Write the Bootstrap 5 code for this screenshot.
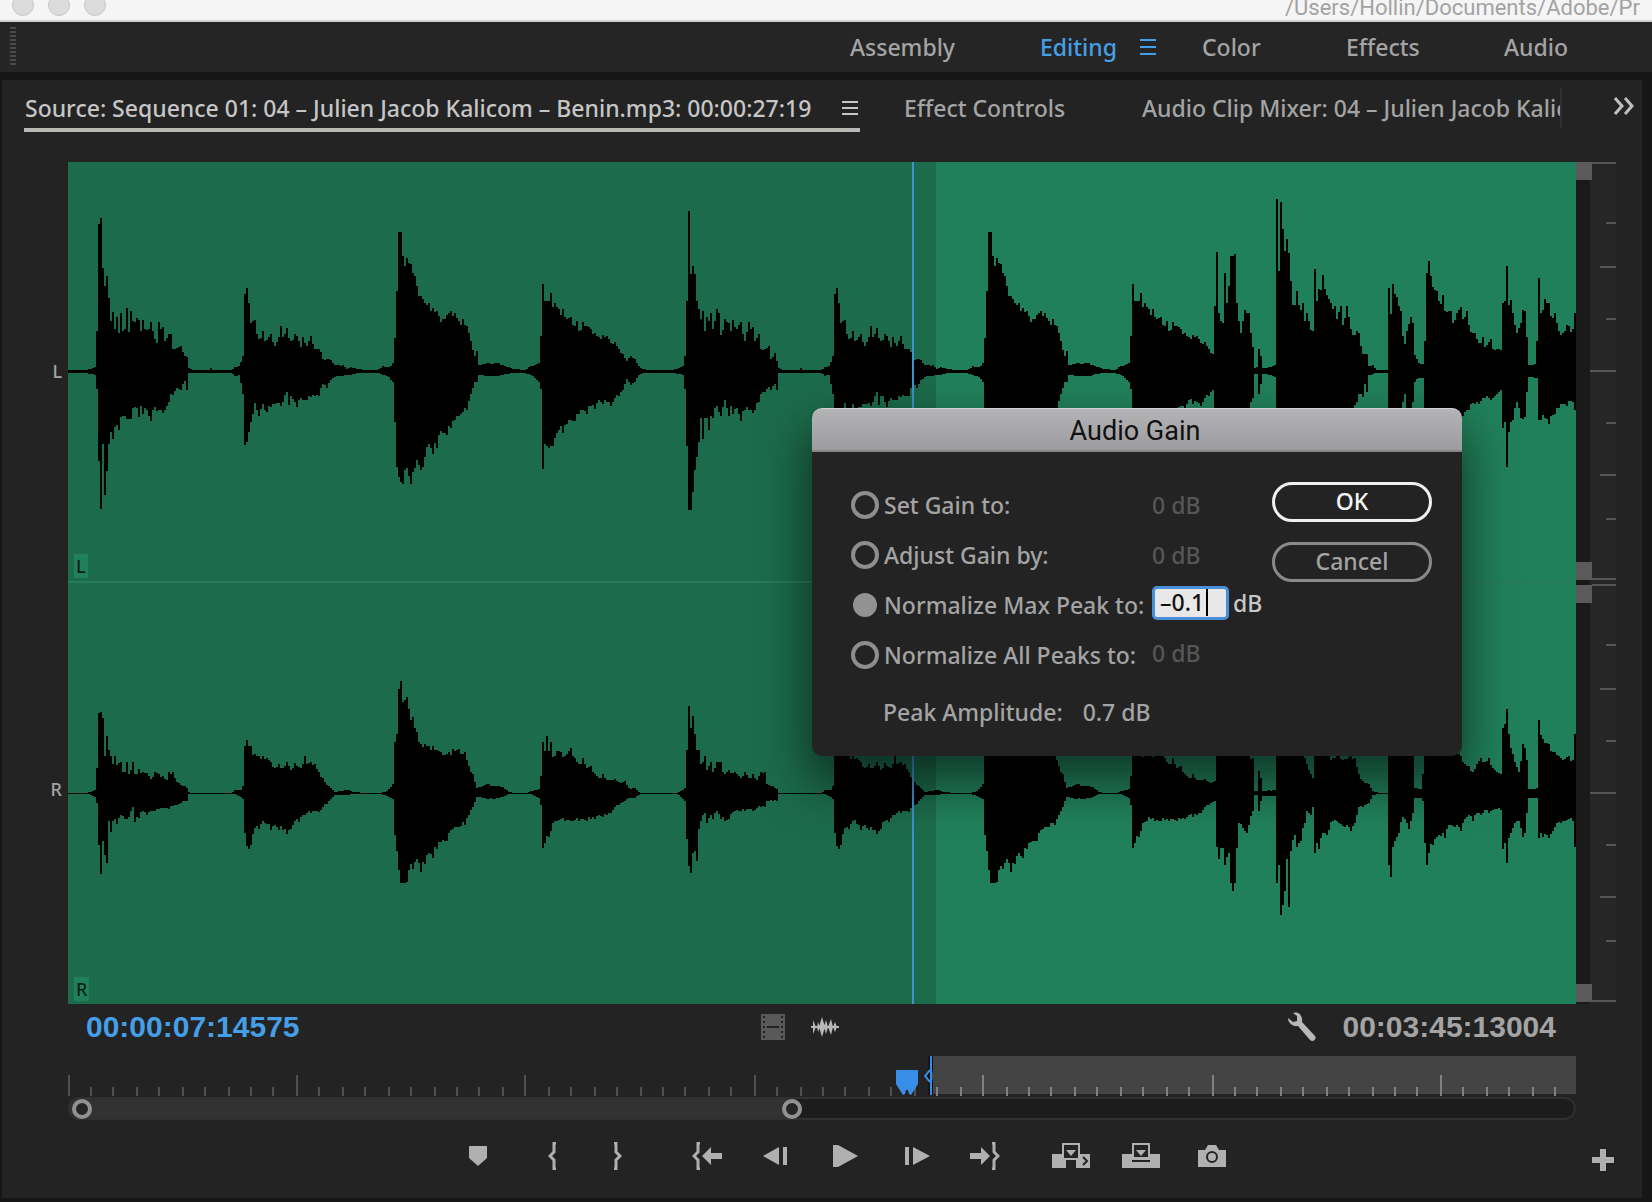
<!DOCTYPE html>
<html lang="en">
<head>
<meta charset="utf-8">
<meta name="viewport" content="width=device-width, initial-scale=1">
<title>Source Monitor</title>
<link href="https://cdn.jsdelivr.net/npm/bootstrap@5.3.0/dist/css/bootstrap.min.css" rel="stylesheet">
<style>
:root{--ui:#232323;--edge:#161616;--txt:#a4a4a4;--icon:#b0b0b0;--blue:#459fe6}
body{background:var(--edge);color:var(--txt);font-family:"Noto Sans","Open Sans",sans-serif;font-size:23px;font-weight:500;line-height:32px;height:100vh;min-height:900px;overflow:hidden}
a,a:hover{color:inherit;text-decoration:none}
svg{display:block;flex:none}
.titlebar{height:22px;background:#f5f5f5;border-bottom:2px solid #cfcfcf;padding-left:12px}
.light-dot{width:22px;height:22px;border-radius:50%;background:#dcdcdc;border:1px solid #c8c8c8;margin-top:-6px}
.doc-path{width:367px;color:#a3a3a3;font:22px/28px Roboto,"Liberation Sans",sans-serif;margin-top:-6px;white-space:nowrap}
.workspaces{height:50px;background:#252525}
.grip{width:6px;height:40px;margin-left:10px;background:repeating-linear-gradient(#4a4a4a 0 2px,transparent 2px 4px)}
.ws-list{display:grid;grid-template-columns:190px 162px 144px 158px 148px}
.active-ws{color:var(--blue)}
.monitor{background:var(--ui);margin:8px 10px 4px 2px}
.tabs{display:grid;grid-template-columns:836px 155px minmax(0,1fr) 80px;height:54px;padding:8px 0 0 22px}
.tab-on{color:#c6c6c6;border-bottom:4px solid #b9b9b5;height:44px;padding:0 2px 0 1px}
.tab-two{padding:4px 0;margin-left:44px;white-space:nowrap}
.tab-three{padding:4px 0;margin-left:127px;height:40px;white-space:nowrap;overflow:hidden;border-right:2px solid #303030}
.stage{padding:28px 26px 0 0}
.gutter{width:66px;font-size:18px;line-height:24px;padding-bottom:6px}
.gutter span{flex:1 1 0;display:flex;align-items:center;justify-content:flex-end;padding-right:6px}
.wave{background:linear-gradient(90deg,#1c6b4c 0 57.56%,#21805c 57.56%)}
.channel{flex:422 1 0;min-height:0}
.channel svg{position:absolute;inset:0;width:100%;height:100%}
.split{flex-grow:420;border-bottom:2px solid #277b5c}
.chip{position:absolute;left:6px;bottom:3px;background:#21805c;color:#0a1f17;font-size:18px;line-height:24px;padding:0 2px}
.playline{position:absolute;left:55.97%;top:0;bottom:0;width:2px;background:#3d92cf}
.vscroll{width:14px;background:#1a1a1a}
.vscroll div{flex:1 1 0}
.vscroll i{display:block;width:16px;height:18px;background:#5a5a5a;position:relative}
.scale{width:26px;background:#262626}
.scale svg{flex:1 1 0;min-height:0;width:26px}
.info{height:50px;padding:0 86px 4px 84px;font:bold 30px/46px "Liberation Sans",Arial,sans-serif}
.info .side{flex:1 1 0}
.modes{gap:26px;padding-right:42px}
.time-in{color:var(--blue)}
.ruler{height:40px;margin:2px 66px 0 66px}
.ruler .bandbg{position:absolute;left:57.2%;right:0;top:0;height:38px;background:#444}
.ruler>.tickmarks{position:absolute;left:0;top:0;width:100%;height:40px}
.head-mark{position:absolute;left:54.9%;top:14px}
.in-mark{position:absolute;left:56.7%;top:0}
.zoombar{height:23px;margin:1px 66px 0 66px;background:#1c1c1c;border:2px solid #303030;border-radius:12px}
.zoombar .thumb{width:48.7%;height:100%;background:#323232;border-radius:10px}
.knob{width:20px;height:20px;border:4px solid #929292;border-radius:50%;background:#262626}
.transport{height:78px;padding:0 28px 6px 466px}
.transport .btn,.bare{border:0;padding:0;color:var(--icon);display:block;line-height:0}
.transport-set{display:grid;grid-template-columns:80px 64px 80px 71px 70px 72px 65px 82px 70px 76px 28px;height:28px;align-items:center}
.gain{position:absolute;left:812px;top:408px;width:650px;background:var(--ui);border-radius:10px;box-shadow:0 24px 50px 4px rgba(0,0,0,.55);border:0;color:var(--txt)}
.gain-head{height:44px;background:linear-gradient(#b4b4b6,#9c9c9e);border-top:1px solid #d2d2d2;border-bottom:2px solid #858587;border-radius:10px 10px 0 0;color:#111;font:27px/44px Roboto,"Liberation Sans",sans-serif;padding-right:4px}
.gain-body{padding:28px 30px 28px 39px}
.gain-row{display:grid;grid-template-columns:33px 268px 1fr;height:50px;align-items:center}
.gain-row .form-check-input{width:28px;height:28px;margin:0;border:4px solid #8e8e8e;background:transparent;box-shadow:none}
.gain-row .form-check-input:checked{background:#929292;width:24px;height:24px;margin-left:2px;border-color:#929292}
.off{color:#565656}
.gain-edit{gap:4px;color:#c8c8c8;padding-bottom:4px}
.gain-val{width:77px;height:34px;border:3px solid #4a8fd8;border-radius:5px;background:#e8e8e8;color:#111;padding:0 0 2px 5px;font-size:23px;line-height:26px;font-weight:500}
.caret-bar{position:absolute;left:54px;top:3px;width:2px;height:27px;background:#000}
.pill{width:160px;height:40px;border-radius:20px;border:3px solid #8a8a8a;color:var(--txt);font-size:23px;font-weight:500;line-height:30px;padding:0 0 2px}
.pill.ok{border-color:#f0f0f0;color:#f4f4f4}
</style>
<script src="https://cdn.jsdelivr.net/npm/bootstrap@5.3.0/dist/js/bootstrap.bundle.min.js"></script>
</head>
<body class="d-flex flex-column">
<header class="titlebar d-flex justify-content-between overflow-hidden flex-shrink-0">
  <div class="d-flex" style="gap:14px"><span class="light-dot"></span><span class="light-dot"></span><span class="light-dot"></span></div>
  <div class="doc-path">/Users/Hollin/Documents/Adobe/Pr</div>
</header>
<nav class="workspaces d-flex align-items-center justify-content-between flex-shrink-0">
  <div class="grip"></div>
  <div class="ws-list">
    <a href="#">Assembly</a>
    <a href="#" class="active-ws d-flex align-items-center justify-content-between" style="padding-right:46px">Editing <svg width="16" height="16" fill="currentColor"><path d="M0 0h16v2H0zM0 7h16v2H0zM0 14h16v2H0z"/></svg></a>
    <a href="#">Color</a><a href="#">Effects</a><a href="#">Audio</a>
  </div>
</nav>
<main class="monitor flex-fill d-flex flex-column">
  <nav class="tabs flex-shrink-0">
    <a href="#" class="tab-on d-flex align-items-center justify-content-between text-nowrap">Source: Sequence 01: 04 – Julien Jacob Kalicom – Benin.mp3: 00:00:27:19
      <svg width="16" height="14" fill="currentColor"><path d="M0 0h16v2H0zM0 6h16v2H0zM0 12h16v2H0z"/></svg></a>
    <a href="#" class="tab-two">Effect Controls</a>
    <a href="#" class="tab-three">Audio Clip Mixer: 04 – Julien Jacob Kalicom</a>
    <button class="btn bare align-self-start ms-auto" style="margin:9px 8px 0 0" aria-label="More tabs"><svg width="20" height="18" fill="none" stroke="#c0c0c0" stroke-width="3"><path d="M1 1l7 8-7 8M11 1l7 8-7 8"/></svg></button>
  </nav>
  <section class="stage flex-fill d-flex">
    <div class="gutter d-flex flex-column"><span>L</span><span>R</span></div>
    <div class="wave flex-fill d-flex flex-column position-relative">
      <div class="channel split position-relative"><svg id="waveL" viewBox="0 0 1508 418" preserveAspectRatio="none"></svg><span class="chip">L</span></div>
      <div class="channel position-relative"><svg id="waveR" viewBox="0 0 1508 422" preserveAspectRatio="none"></svg><span class="chip">R</span></div>
      <div class="playline"></div>
    </div>
    <div class="vscroll d-flex flex-column">
      <div class="d-flex flex-column justify-content-between" style="padding-bottom:4px"><i></i><i></i></div>
      <div class="d-flex flex-column justify-content-between" style="padding:1px 0 2px"><i></i><i></i></div>
    </div>
    <div class="scale d-flex flex-column">
      <svg viewBox="0 0 26 421" preserveAspectRatio="none" stroke="#555" stroke-width="2"><path d="M2 1h24M16 61h10M10 105h16M16 157h10M0 209h26M16 261h10M10 313h16M16 357h10M2 417h24"/></svg>
      <svg viewBox="0 0 26 421" preserveAspectRatio="none" stroke="#555" stroke-width="2"><path d="M2 2h24M16 62h10M10 106h16M16 158h10M0 210h26M16 262h10M10 314h16M16 358h10M2 418h24"/></svg>
    </div>
  </section>
  <section class="info d-flex align-items-center flex-shrink-0">
    <div class="side time-in">00:00:07:14575</div>
    <div class="modes d-flex align-items-center">
      <svg width="24" height="26"><path fill="#595959" d="M0 0h24v26H0z"/><path stroke="#222" stroke-width="2" stroke-dasharray="2 3" d="M3 2v24M21 2v24"/><path stroke="#222" stroke-width="2" d="M6 13h12"/></svg>
      <svg width="28" height="22" fill="none" stroke="#b8b8b8"><path stroke-width="2" d="M0 11h28"/><path fill="#b8b8b8" stroke="none" d="M2 4l3 7-3 7zM6 11l1-5 2 5-2 5zM8 11l3-10 3 10-3 10zM13 11l2-7 2 7-2 7zM17 11l3-8 2 8-2 8zM22 11l2-5 2 5-2 5z"/></svg>
    </div>
    <div class="side d-flex justify-content-end align-items-center" style="gap:26px">
      <svg width="28" height="30" viewBox="0 0 28 30" fill="#b8b8b8"><path d="M5 1c5-2 10 2 9 9l13 14c2 3-2 7-5 4L10 14C5 15 0 11 0 6l5 4 4-1V4z"/></svg>
      <span>00:03:45:13004</span>
    </div>
  </section>
  <section class="ruler position-relative flex-shrink-0">
    <div class="bandbg"></div>
    <svg class="tickmarks" id="ticks" viewBox="0 0 1508 40" preserveAspectRatio="none"></svg>
    <svg class="head-mark" width="22" height="26" fill="#388de6"><path d="M0 0h22v14l-5 8-2 3-2-1-1-4h-2l-1 4-2 1-2-3-5-8z"/></svg>
    <svg class="in-mark" width="10" height="40" fill="none"><path stroke="#101010" stroke-width="5" d="M8 0v14l-5 6 5 6v13"/><path stroke="#388de6" stroke-width="2" d="M8 0v39M7 14l-5 6 5 6"/></svg>
  </section>
  <section class="zoombar flex-shrink-0">
    <div class="thumb d-flex align-items-center justify-content-between" style="padding-left:2px"><span class="knob"></span><span class="knob"></span></div>
  </section>
  <section class="transport d-flex align-items-center justify-content-between flex-shrink-0">
    <div class="transport-set">
      <button class="btn" aria-label="Add marker"><svg width="20" height="20" fill="currentColor"><path d="M1 0h18v12l-9 8-9-8z"/></svg></button>
      <button class="btn" aria-label="Mark in"><svg width="10" height="28" fill="none" stroke="currentColor" stroke-width="3"><path d="M8 1H6v9l-4 4 4 4v9h2"/></svg></button>
      <button class="btn" aria-label="Mark out"><svg width="10" height="28" fill="none" stroke="currentColor" stroke-width="3"><path d="M2 1h2v9l4 4-4 4v9H2"/></svg></button>
      <button class="btn" aria-label="Go to in"><svg width="30" height="28" fill="none" stroke="currentColor" stroke-width="3"><path d="M8 1H6v9l-4 4 4 4v9h2"/><path fill="currentColor" stroke="none" d="M10 14l9-9v6h11v6H19v6z"/></svg></button>
      <button class="btn" aria-label="Step back"><svg width="26" height="20" fill="currentColor"><path d="M0 10L16 1v18zM20 1h4v18h-4z"/></svg></button>
      <button class="btn" aria-label="Play"><svg width="26" height="24" fill="currentColor"><path d="M0 1h5l20 11L5 23H0z"/></svg></button>
      <button class="btn" aria-label="Step forward"><svg width="26" height="20" fill="currentColor"><path d="M0 1h4v18H0zM8 1l17 9-17 9z"/></svg></button>
      <button class="btn" aria-label="Go to out"><svg width="30" height="28" fill="none" stroke="currentColor" stroke-width="3"><path d="M22 1h2v9l4 4-4 4v9h-2"/><path fill="currentColor" stroke="none" d="M20 14l-9-9v6H0v6h11v6z"/></svg></button>
      <button class="btn" aria-label="Insert"><svg width="38" height="26" fill="currentColor"><path d="M0 11h10v6h18v-6h10v14H24v-8H14v8H0z"/><path fill="#232323" stroke="currentColor" stroke-width="2" d="M11 1h16v15H11z"/><path d="M14 7h10l-5 6z"/><path fill="none" stroke="#232323" stroke-width="2" d="M31 14l4 4-4 4"/></svg></button>
      <button class="btn" aria-label="Overwrite"><svg width="38" height="26" fill="currentColor"><path d="M0 11h38v14H0z"/><path fill="#232323" stroke="currentColor" stroke-width="2" d="M11 1h16v14H11z"/><path d="M14 7h10l-5 6z"/><path fill="#232323" d="M10 17h18v2H10z"/></svg></button>
      <button class="btn" aria-label="Export frame"><svg width="28" height="24" fill="currentColor"><path d="M0 6h7l3-5h8l3 5h7v17H0z"/><circle cx="14" cy="13" r="5" fill="none" stroke="#232323" stroke-width="2"/></svg></button>
    </div>
    <button class="btn" aria-label="Button editor"><svg width="22" height="30" fill="currentColor"><path d="M8 8h6v8h8v6h-8v8H8v-8H0v-6h8z"/></svg></button>
  </section>
</main>

<form class="gain" role="dialog" aria-labelledby="gainTitle">
  <div class="gain-head text-center" id="gainTitle">Audio Gain</div>
  <div class="gain-body d-flex justify-content-between">
    <div>
      <div class="gain-row"><input class="form-check-input" type="radio" name="g" id="g1"><label for="g1">Set Gain to:</label><span class="off">0 dB</span></div>
      <div class="gain-row"><input class="form-check-input" type="radio" name="g" id="g2"><label for="g2">Adjust Gain by:</label><span class="off">0 dB</span></div>
      <div class="gain-row"><input class="form-check-input" type="radio" name="g" id="g3" checked><label for="g3">Normalize Max Peak to:</label>
        <span class="gain-edit d-flex align-items-center position-relative"><input class="gain-val" value="–0.1" aria-label="Normalize Max Peak value"><span class="caret-bar"></span>dB</span></div>
      <div class="gain-row"><input class="form-check-input" type="radio" name="g" id="g4"><label for="g4">Normalize All Peaks to:</label><span class="off pb-1">0 dB</span></div>
      <div class="d-flex" style="gap:20px;padding:16px 0 0 32px"><span>Peak Amplitude:</span><span>0.7 dB</span></div>
    </div>
    <div class="d-flex flex-column" style="gap:20px;padding-top:2px">
      <button type="button" class="btn pill ok">OK</button>
      <button type="button" class="btn pill">Cancel</button>
    </div>
  </div>
</form>

<script>
// Envelopes of single notes: [column, above, below]; a column is 2 units wide, 0 is the attack.
const N = {
 aL:[[-9,1,1],[-5,2,2],[-3,4,3],[-2,40,17],[-1,147,89],[0,153,137],[1,103,72],[2,85,123],[3,95,99],[4,73,72],[5,50,60],[6,59,67],[7,42,55],[8,54,53],[9,38,58],[10,58,45],[11,40,44],[12,42,44],[13,63,47],[14,39,47],[15,60,47],[16,50,36],[18,53,36],[19,51,45],[20,40,34],[21,51,42],[22,42,36],[24,42,44],[25,49,49],[26,40,38],[28,28,39],[29,49,38],[31,44,41],[32,30,38],[34,37,30],[35,37,22],[36,22,23],[38,23,16],[40,25,18],[42,15,9],[43,14,18],[44,3,1],[46,1,1],[54,1,1],[55,3,1],[56,1,1]],
 aR:[[-7,1,1],[-5,2,2],[-3,4,4],[-2,26,10],[-1,81,52],[0,82,81],[1,76,48],[2,38,62],[3,58,70],[4,44,28],[5,38,39],[6,30,28],[7,38,26],[8,29,31],[10,32,22],[11,22,23],[12,22,26],[13,32,26],[14,20,24],[16,32,14],[17,20,29],[18,20,24],[19,25,25],[21,22,18],[23,21,22],[25,15,18],[27,22,18],[29,20,16],[31,18,15],[33,14,15],[34,22,16],[36,22,13],[38,12,12],[40,9,10],[42,8,8],[43,6,8],[44,2,1],[46,1,1]],
 bL:[[-8,1,1],[-6,4,4],[-4,5,3],[-2,15,22],[-1,77,73],[0,83,70],[1,68,60],[2,48,50],[3,50,42],[4,51,31],[5,37,38],[6,32,44],[8,40,32],[9,30,38],[10,31,40],[12,37,35],[14,25,32],[16,34,31],[17,45,34],[18,34,30],[20,43,20],[21,33,33],[22,30,24],[24,37,30],[25,35,35],[27,24,26],[28,34,28],[30,25,28],[32,35,25],[34,22,24],[36,22,24],[37,19,16],[38,12,12],[40,12,16],[42,11,8],[44,6,5],[48,6,4],[50,2,3],[52,4,3],[56,2,1],[60,1,1]],
 bR:[[-8,1,1],[-6,4,1],[-3,4,4],[-2,8,6],[-1,48,40],[0,54,53],[1,48,56],[2,48,52],[3,39,41],[4,40,35],[6,38,36],[8,38,28],[10,36,31],[12,32,37],[14,26,32],[16,30,37],[18,26,37],[20,32,41],[22,24,36],[24,31,28],[26,27,29],[28,30,22],[29,38,22],[30,30,20],[32,32,20],[34,30,18],[36,22,19],[38,16,14],[40,9,11],[42,6,6],[44,2,2],[50,4,2],[54,2,1],[58,1,1]],
 cL:[[-11,1,1],[-8,5,3],[-5,4,5],[-3,8,10],[-2,33,50],[-1,80,95],[0,139,105],[1,139,110],[2,115,112],[3,105,98],[4,113,96],[5,108,104],[6,107,112],[7,98,100],[8,95,96],[9,85,88],[10,75,93],[11,75,98],[12,72,95],[13,68,85],[15,68,72],[17,63,82],[19,60,76],[20,55,63],[22,52,61],[24,56,63],[26,60,56],[28,58,48],[30,50,44],[32,52,40],[34,45,38],[36,30,22],[38,15,10],[39,20,10],[40,6,3],[44,8,4],[50,8,4],[54,4,2],[58,2,1],[62,1,1]],
 cR:[[-10,1,1],[-6,3,3],[-3,10,6],[-2,52,42],[-1,60,58],[0,105,77],[1,113,90],[2,92,90],[3,94,90],[4,97,89],[5,85,77],[7,77,76],[9,62,66],[10,52,70],[11,50,79],[13,50,71],[15,48,60],[17,48,65],[19,44,56],[21,42,49],[24,40,48],[27,45,36],[30,45,34],[33,42,32],[35,28,22],[37,20,14],[39,6,4],[44,10,6],[48,8,6],[52,7,4],[55,2,1],[58,1,1]],
 dL:[[-9,1,1],[-5,3,2],[-3,5,3],[-2,15,17],[-1,70,74],[0,160,138],[1,97,138],[2,105,120],[3,97,98],[4,70,85],[5,62,70],[6,52,46],[7,60,67],[8,40,46],[9,54,46],[10,50,58],[11,58,44],[12,42,46],[14,62,34],[15,58,40],[16,36,44],[18,52,28],[20,48,44],[21,40,34],[22,51,42],[24,42,36],[26,49,49],[28,30,38],[30,49,38],[32,44,41],[33,30,38],[35,37,30],[36,22,22],[38,22,20],[40,25,15],[41,12,18],[43,18,12],[44,10,18],[45,3,1],[47,1,1],[55,1,1],[56,3,1],[57,1,1]],
 dR:[[-7,1,1],[-5,2,2],[-2,6,8],[-1,44,46],[0,88,73],[1,66,80],[2,78,60],[3,60,58],[4,44,68],[5,44,36],[6,30,28],[8,38,20],[9,24,30],[11,32,22],[12,22,26],[14,32,18],[16,32,26],[17,22,24],[18,20,28],[20,24,26],[23,22,18],[26,16,18],[28,22,18],[30,16,16],[32,20,18],[34,14,15],[36,22,14],[38,22,14],[39,10,8],[42,8,8],[44,5,8],[45,1,1]],
 eL:[[-9,1,1],[-6,5,3],[-2,8,10],[-1,35,17],[0,87,97],[1,70,72],[2,70,74],[3,70,76],[4,78,74],[5,64,74],[6,68,66],[8,62,58],[10,62,61],[12,52,52],[14,54,48],[16,45,49],[17,50,42],[18,40,42],[20,49,38],[22,45,42],[24,42,34],[26,38,37],[28,34,28],[30,36,32],[32,35,30],[34,28,34],[36,29,26],[38,22,24],[40,17,18],[42,10,7],[44,15,13],[46,12,10],[48,5,3],[50,2,1],[53,1,1]],
 eR:[[-8,1,1],[-6,3,1],[-2,5,5],[-1,18,12],[0,52,55],[1,43,50],[2,58,43],[3,43,44],[4,52,38],[5,37,30],[7,43,28],[9,42,26],[11,38,28],[14,46,28],[16,36,27],[18,30,28],[20,36,26],[22,26,28],[24,28,26],[26,20,26],[28,16,22],[30,20,24],[32,14,22],[34,14,20],[36,15,14],[38,12,12],[41,13,8],[43,6,5],[46,6,5],[48,2,2],[50,1,1]]
};
// The busy last quarter: [x, above, below].
const tailL = [[1148,119,60],[1150,58,60],[1152,50,60],[1154,48,60],[1156,98,60],[1158,68,60],[1160,85,60],[1162,115,60],[1164,115,60],[1166,117,60],[1168,68,60],[1170,50,40],[1172,38,37],[1174,50,45],[1176,61,50],[1180,58,45],[1182,38,30],[1184,24,26],[1186,3,2],[1188,4,2],[1190,22,22],[1192,15,12],[1194,3,2],[1202,4,3],[1206,6,5],[1208,172,80],[1210,100,80],[1212,169,80],[1214,142,80],[1216,120,80],[1218,132,80],[1220,118,80],[1222,90,80],[1224,66,60],[1226,66,60],[1228,80,60],[1230,66,60],[1234,68,60],[1236,50,60],[1238,58,60],[1240,50,50],[1244,40,36],[1246,102,60],[1248,70,60],[1250,82,60],[1254,96,60],[1258,76,60],[1262,68,60],[1266,65,60],[1268,52,50],[1272,65,50],[1274,46,50],[1278,65,50],[1282,42,40],[1284,36,38],[1288,40,30],[1290,38,22],[1294,17,25],[1296,17,12],[1298,17,20],[1300,5,3],[1304,6,2],[1308,1,1],[1318,1,1],[1320,83,60],[1322,57,60],[1324,87,60],[1328,74,60],[1330,65,50],[1332,60,40],[1334,35,30],[1336,27,22],[1338,40,36],[1342,54,40],[1344,48,30],[1346,16,10],[1350,8,6],[1354,7,6],[1356,30,50],[1358,98,60],[1360,110,60],[1362,95,60],[1368,80,60],[1370,70,60],[1374,76,60],[1376,60,55],[1382,60,50],[1384,48,50],[1388,58,48],[1392,64,46],[1394,52,44],[1398,60,38],[1400,46,38],[1406,38,32],[1410,28,32],[1414,34,26],[1416,24,26],[1422,32,28],[1424,22,26],[1430,22,20],[1432,21,18],[1434,68,56],[1436,70,50],[1438,105,95],[1440,66,60],[1442,71,50],[1444,58,48],[1448,38,30],[1452,48,46],[1454,61,47],[1456,60,45],[1458,34,20],[1460,6,5],[1466,7,6],[1468,30,6],[1470,93,48],[1472,58,48],[1476,72,46],[1480,68,52],[1482,55,44],[1486,58,42],[1490,40,36],[1494,38,32],[1498,46,34],[1504,42,30],[1506,58,38]];
const tailR = [[1148,60,54],[1150,50,66],[1154,40,55],[1156,50,72],[1160,60,60],[1162,60,90],[1164,60,98],[1166,60,90],[1168,50,55],[1170,48,30],[1174,45,35],[1178,45,40],[1180,40,32],[1184,36,18],[1186,3,2],[1188,3,2],[1190,23,18],[1192,16,8],[1194,3,3],[1206,4,3],[1208,90,90],[1210,80,72],[1212,80,122],[1214,80,112],[1216,80,98],[1218,70,66],[1220,70,114],[1222,60,58],[1226,50,42],[1228,50,54],[1232,45,48],[1236,36,30],[1238,30,18],[1240,24,20],[1242,20,22],[1244,16,14],[1246,50,60],[1248,45,50],[1250,40,56],[1254,45,40],[1258,40,42],[1264,36,28],[1270,40,30],[1276,35,34],[1282,38,38],[1286,36,30],[1290,20,14],[1294,13,14],[1300,10,10],[1304,3,2],[1310,1,1],[1318,1,1],[1320,60,72],[1322,55,84],[1324,50,54],[1330,45,40],[1334,38,24],[1340,45,36],[1344,38,20],[1346,6,5],[1352,5,5],[1354,20,8],[1356,60,50],[1358,70,72],[1360,65,60],[1364,60,52],[1370,52,42],[1376,50,45],[1380,50,32],[1386,45,34],[1392,38,38],[1396,30,26],[1400,28,22],[1404,22,28],[1408,30,20],[1412,36,22],[1416,32,17],[1420,36,20],[1426,24,16],[1432,20,17],[1434,66,56],[1436,70,50],[1438,85,70],[1440,60,45],[1444,40,35],[1450,22,28],[1454,50,44],[1456,46,40],[1458,34,20],[1460,5,5],[1468,6,5],[1470,74,45],[1474,55,44],[1480,50,45],[1486,42,34],[1492,36,30],[1500,38,26],[1504,34,28],[1506,60,54]];
const notes = [['a',32],['b',178],['c',330],['e',474],['d',620],['b',768],['c',920],['e',1064]];
function draw(id, side, tail, mid) {
  let pts = [[0,1,1]];
  for (const [n, x0] of notes) for (const [c,u,d] of N[n+side]) {
    const x = x0 + c*2;
    while (pts[pts.length-1][0] >= x) pts.pop();
    if (x < 1148) pts.push([x,u,d]);
  }
  pts = pts.concat(tail);
  let top = '', bottom = '', k = 0;
  for (let x = 0; x < 1508; x += 2) {
    while (k < pts.length-2 && pts[k+1][0] <= x) k++;
    const a = pts[k], b = pts[k+1], t = Math.min(1, (x-a[0])/(b[0]-a[0]));
    let u = a[1]+(b[1]-a[1])*t, d = a[2]+(b[2]-a[2])*t;
    if (t > 0 && t < 1) { u -= (x*7%5)*u/45; d -= (x*3%7)*d/60; }
    u = Math.max(1, Math.round(u)); d = Math.max(1, Math.round(d));
    top += `V${mid-u}H${x+2}`;
    bottom = `V${mid+d}H${x}` + bottom;
  }
  document.getElementById(id).innerHTML = `<path shape-rendering="crispEdges" d="M0 ${mid}${top}${bottom}Z"/>`;
}
draw('waveL','L',tailL,209);
draw('waveR','R',tailR,211);
let t = '';
for (let i = 0; i < 66; i++) {
  const x = 2*Math.floor(i*22.88/2), y = i%10 ? 31 : 19;
  t += `<rect x="${x}" y="${y}" width="2" height="${40-y}" fill="${x>864?'#808080':'#505050'}"/>`;
}
document.getElementById('ticks').innerHTML = t;
</script>
</body>
</html>
